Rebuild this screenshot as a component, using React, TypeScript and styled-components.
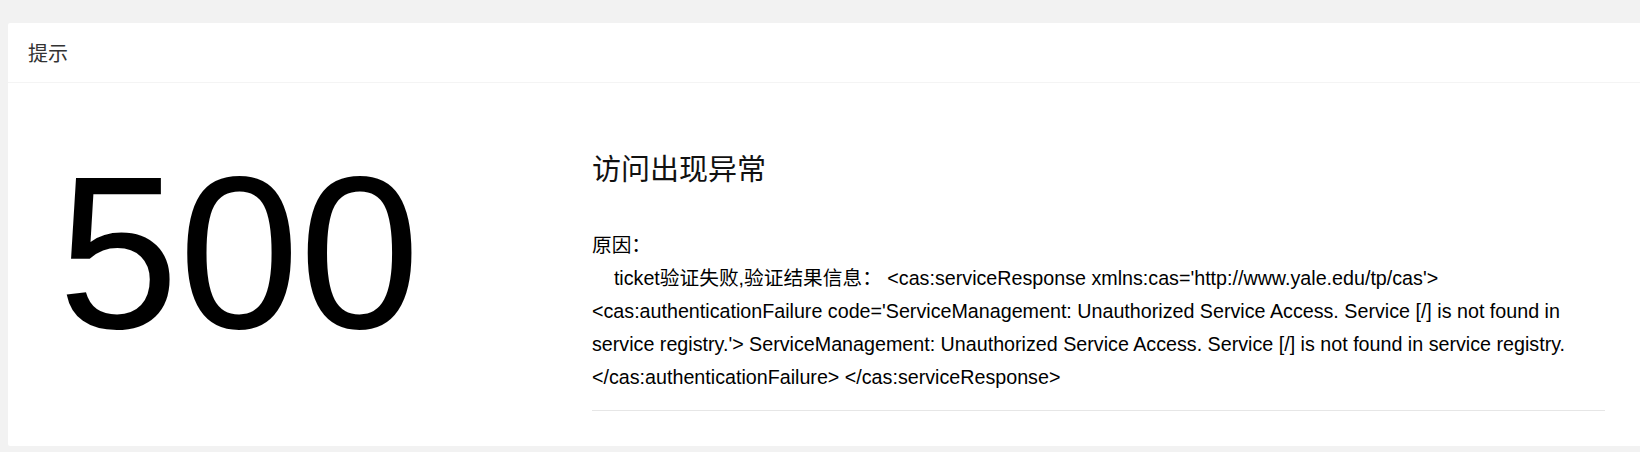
import React from 'react';
import styled, { createGlobalStyle } from 'styled-components';

const GlobalStyle = createGlobalStyle`
  html, body {
    margin: 0;
    padding: 0;
    background: #f2f2f2;
    font-family: "Liberation Sans", "Noto Sans CJK SC", Arial, sans-serif;
  }
`;

const Page = styled.div`
  display: flex;
  padding: 23px 0 0 8px;
  min-height: 452px;
  box-sizing: border-box;
`;

const Card = styled.div`
  flex: 1;
  align-self: flex-start;
  background: #fff;
  border-radius: 2px 0 0 2px;
`;

const CardHeader = styled.div`
  height: 59px;
  display: flex;
  align-items: center;
  padding-left: 20px;
  border-bottom: 1px solid #f4f4f4;
  font-size: 20px;
  color: #333;
`;

const CardBody = styled.div`
  display: flex;
`;

const CodeColumn = styled.div`
  width: 534px;
  flex: none;
  padding: 62px 0 0 50px;
`;

const Code = styled.div`
  font-family: "Liberation Sans", Arial, sans-serif;
  font-size: 217px;
  line-height: 1;
  color: #000;
`;

const InfoColumn = styled.div`
  flex: 1;
  padding: 67px 35px 35px 0;
  min-width: 0;
`;

const Title = styled.h2`
  margin: 0;
  font-size: 29px;
  line-height: 40px;
  font-weight: normal;
  color: #111;
`;

const Reason = styled.p`
  margin: 39px 0 0;
  font-size: 19.7px;
  line-height: 33px;
  color: #000;
  word-wrap: break-word;
`;

const Divider = styled.hr`
  margin: 16px 0 0;
  border: none;
  border-top: 1px solid #e6e6e6;
`;

const detail =
  "\u00a0\u00a0\u00a0\u00a0ticket验证失败,验证结果信息： <cas:serviceResponse xmlns:cas='http://www.yale.edu/tp/cas'> <cas:authenticationFailure code='ServiceManagement: Unauthorized Service Access. Service [/] is not found in service registry.'> ServiceManagement: Unauthorized Service Access. Service [/] is not found in service registry. </cas:authenticationFailure> </cas:serviceResponse>";

export default function App() {
  return (
    <>
      <GlobalStyle />
      <Page>
        <Card>
          <CardHeader>提示</CardHeader>
          <CardBody>
            <CodeColumn>
              <Code>500</Code>
            </CodeColumn>
            <InfoColumn>
              <Title>访问出现异常</Title>
              <Reason>
                原因：
                <br />
                {detail}
              </Reason>
              <Divider />
            </InfoColumn>
          </CardBody>
        </Card>
      </Page>
    </>
  );
}
